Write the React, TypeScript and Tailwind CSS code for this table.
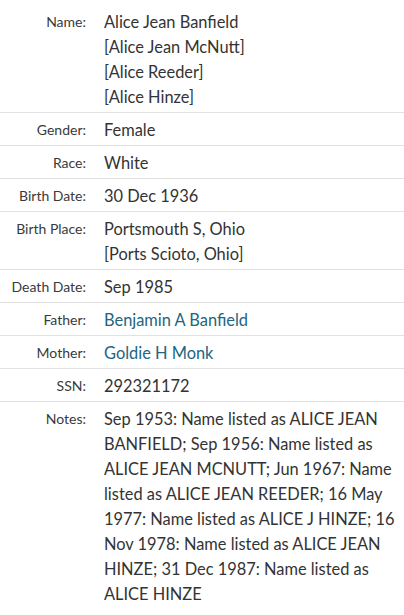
const rows: { label: string; lines: string[]; link?: boolean }[] = [
  { label: "Name:", lines: ["Alice Jean Banfield", "[Alice Jean McNutt]", "[Alice Reeder]", "[Alice Hinze]"] },
  { label: "Gender:", lines: ["Female"] },
  { label: "Race:", lines: ["White"] },
  { label: "Birth Date:", lines: ["30 Dec 1936"] },
  { label: "Birth Place:", lines: ["Portsmouth S, Ohio", "[Ports Scioto, Ohio]"] },
  { label: "Death Date:", lines: ["Sep 1985"] },
  { label: "Father:", lines: ["Benjamin A Banfield"], link: true },
  { label: "Mother:", lines: ["Goldie H Monk"], link: true },
  { label: "SSN:", lines: ["292321172"] },
];

const notes =
  "Sep 1953: Name listed as ALICE JEAN BANFIELD; Sep 1956: Name listed as ALICE JEAN MCNUTT; Jun 1967: Name listed as ALICE JEAN REEDER; 16 May 1977: Name listed as ALICE J HINZE; 16 Nov 1978: Name listed as ALICE JEAN HINZE; 31 Dec 1987: Name listed as ALICE HINZE";

function Row({ label, children, last }: { label: string; children: React.ReactNode; last?: boolean }) {
  return (
    <div className={`flex pt-1 pb-[3px] ${last ? "" : "border-b border-[#e2e2e2]"}`}>
      <div className="w-[86px] shrink-0 text-right text-[14px] leading-[25px] text-[#3a3a3a]">{label}</div>
      <div className="ml-[18px] flex-1 pr-2 text-[16.4px] leading-[25px] text-[#333]">{children}</div>
    </div>
  );
}

export default function App() {
  return (
    <div className="h-[615px] w-[404px] overflow-hidden bg-white pt-[5px] font-['Lato',sans-serif]">
      {rows.map((r) => (
        <Row key={r.label} label={r.label}>
          {r.lines.map((l) => (
            <div key={l} className={r.link ? "text-[#21657f]" : ""}>
              {l}
            </div>
          ))}
        </Row>
      ))}
      <Row label="Notes:" last>
        <p>{notes}</p>
      </Row>
    </div>
  );
}
